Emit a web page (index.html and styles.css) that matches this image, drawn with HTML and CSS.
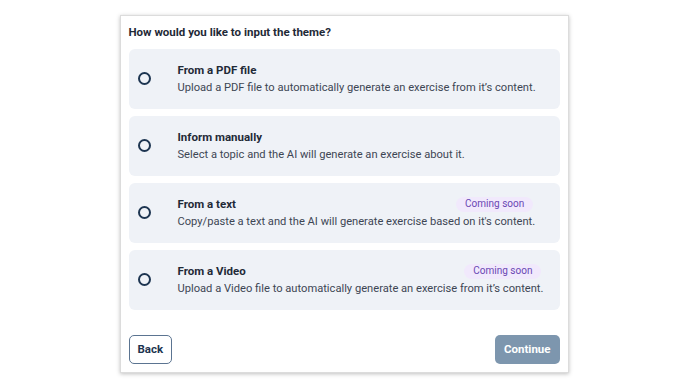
FILE: index.html
```html
<!DOCTYPE html>
<html lang="en">
<head>
    <meta charset="UTF-8">
    <meta name="viewport" content="width=device-width, initial-scale=1.0">
    <title>Input theme</title>
    <link rel="stylesheet" href="styles.css">
</head>
<body>
    <div class="dialog">
        <h2 class="question">How would you like to input the theme?</h2>

        <div class="options">
            <label class="option">
                <span class="radio"></span>
                <span class="option-text">
                    <span class="option-head">
                        <span class="option-title">From a PDF file</span>
                    </span>
                    <span class="option-desc">Upload a PDF file to automatically generate an exercise from it’s content.</span>
                </span>
            </label>

            <label class="option">
                <span class="radio"></span>
                <span class="option-text">
                    <span class="option-head">
                        <span class="option-title">Inform manually</span>
                    </span>
                    <span class="option-desc">Select a topic and the AI will generate an exercise about it.</span>
                </span>
            </label>

            <label class="option">
                <span class="radio"></span>
                <span class="option-text">
                    <span class="option-head">
                        <span class="option-title">From a text</span>
                        <span class="badge">Coming soon</span>
                    </span>
                    <span class="option-desc">Copy/paste a text and the AI will generate exercise based on it's content.</span>
                </span>
            </label>

            <label class="option">
                <span class="radio"></span>
                <span class="option-text">
                    <span class="option-head">
                        <span class="option-title">From a Video</span>
                        <span class="badge">Coming soon</span>
                    </span>
                    <span class="option-desc">Upload a Video file to automatically generate an exercise from it’s content.</span>
                </span>
            </label>
        </div>

        <div class="actions">
            <button class="btn btn-back">Back</button>
            <button class="btn btn-continue">Continue</button>
        </div>
    </div>
</body>
</html>
```

FILE: styles.css
```css
/* page */
body {
    margin: 0;
    height: 387px;
    display: flex;
    align-items: center;
    justify-content: center;
    background: #ffffff;
    font-family: 'Roboto', sans-serif;
    color: #1f2a37;
}

/* dialog card */
.dialog {
    width: 431px;
    padding: 9px 8px 8px;
    background: #ffffff;
    border: 1px solid #dcdcdc;
    box-shadow: 0 1px 4px rgba(0, 0, 0, 0.25);
}

.question {
    margin: 0 0 9px;
    font-size: 11.5px;
    font-weight: 700;
    line-height: 15px;
}

/* options list */
.options {
    display: flex;
    flex-direction: column;
    gap: 7px;
}

.option {
    height: 60px;
    display: flex;
    align-items: center;
    background: #eff2f7;
    border-radius: 6px;
    cursor: pointer;
}

.radio {
    width: 9px;
    height: 9px;
    margin: 0 27px 0 9px;
    border: 2px solid #1d3551;
    border-radius: 50%;
    flex-shrink: 0;
}

/* text block shrinks to the description, badge sits at its right end */
.option-text {
    display: flex;
    flex-direction: column;
    padding-top: 2px;
    white-space: nowrap;
}

.option-head {
    display: flex;
    align-items: center;
    justify-content: space-between;
    height: 16px;
}

.option-title {
    font-size: 11.5px;
    font-weight: 700;
    color: #1f2a37;
}

.option-desc {
    font-size: 11.15px;
    line-height: 19px;
    color: #3d4654;
}

/* coming soon tag */
.badge {
    margin-right: 2px;
    padding: 1px 9px 2px;
    background: #f1e9fc;
    color: #6a47b3;
    border-radius: 8px;
    font-size: 10px;
    line-height: 12px;
}

/* buttons */
.actions {
    display: flex;
    justify-content: space-between;
    margin-top: 25px;
}

.btn {
    height: 29px;
    padding: 0 8px;
    border-radius: 5px;
    font-family: 'Roboto', sans-serif;
    font-size: 11.5px;
    font-weight: 700;
    cursor: pointer;
}

.btn-back {
    background: #ffffff;
    border: 1px solid #5b7491;
    color: #1d3551;
}

.btn-continue {
    background: #7d96ae;
    border: none;
    color: #ffffff;
    padding: 0 9px;
}
```
